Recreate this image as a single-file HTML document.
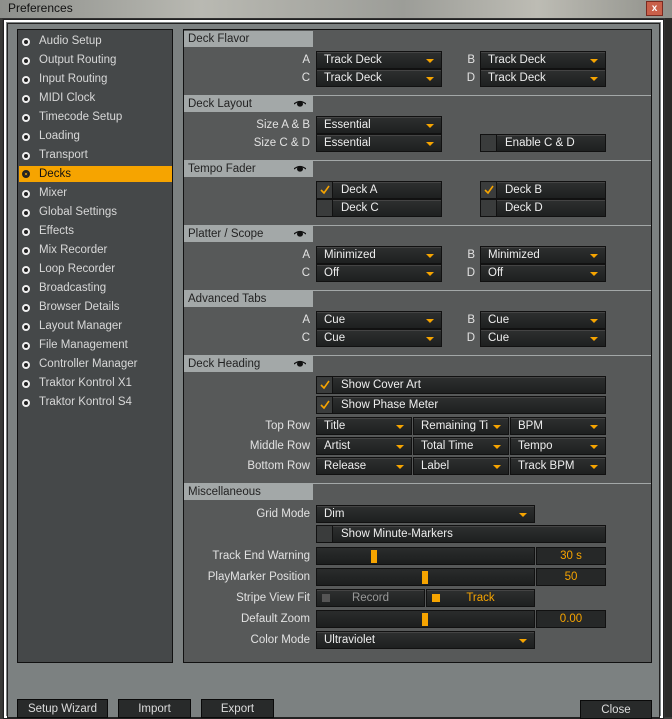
<!DOCTYPE html>
<html><head><meta charset="utf-8"><style>
*{margin:0;padding:0;box-sizing:border-box}
body{width:672px;height:717px;overflow:hidden;background:#3a3a38;font-family:"Liberation Sans",sans-serif;font-size:11.5px;position:relative}
.abs{position:absolute}
#titlebar{left:0;top:0;width:672px;height:18px;background:linear-gradient(90deg,#8d8f8b,#b9b9b2 30%,#9c9d98 60%,#bdbcb4 80%,#8f908a);}
#title{left:8px;top:1px;font-size:12px;color:#111}
#closex{left:646px;top:1px;width:17px;height:15px;background:#c9604a;border:1px solid #7a2a20;color:#fff;font-size:10px;font-weight:bold;text-align:center;line-height:13px}
#frame{left:2px;top:18px;width:663px;height:700px;background:#e8e8e8;border:1px solid #333}
#frame2{left:4px;top:20px;width:659px;height:698px;background:#7c8181;border:2px solid #fff;outline:1px solid #222}
#frame3{left:7px;top:23px;width:653px;height:695px;background:#7c8181;border:1px solid #222}
#right{left:665px;top:18px;width:7px;height:699px;background:#2a2a28}
#list{left:17px;top:29px;width:156px;height:634px;background:#454849;border:1px solid #111}
.li{position:absolute;left:21px;color:#d8d8d8;height:19px;line-height:19px;width:151px;padding-left:18px}
.li::before{content:"";position:absolute;left:1px;top:6px;width:8px;height:8px;border-radius:50%;border:2px solid #eee;background:#222;box-sizing:border-box}
.li.sel{background:#f6a400;color:#111;left:19px;padding-left:20px}
.li.sel::before{border-color:#222;background:#f6a400;left:3px;top:4px;box-shadow:inset 0 0 0 1px #222}
#panel{left:183px;top:29px;width:469px;height:634px;background:#575959;border:1px solid #111}
.hd{position:absolute;left:184px;width:129px;height:16px;background:#a3a8a8;color:#222;line-height:16px;padding-left:4px}
.sep{position:absolute;left:184px;width:467px;height:1px;background:#a3a8a8}
.eye{position:absolute;left:110px;top:4px;width:12px;height:7px}
.lb{position:absolute;color:#e2e2e2;text-align:right;width:140px;left:170px;height:18px;line-height:18px}
.dd{position:absolute;height:18px;background:linear-gradient(#2e3030,#1e2020);border:1px solid #111;color:#eee;line-height:16px;padding-left:7px;white-space:nowrap;overflow:hidden;box-shadow:inset 0 1px 0 #444}
.dd::after{content:"";position:absolute;right:7px;top:7px;border-left:4px solid transparent;border-right:4px solid transparent;border-top:4px solid #f6a400}
.cb{position:absolute;height:18px;background:linear-gradient(#2e3030,#1e2020);border:1px solid #111;color:#eee;line-height:16px;padding-left:24px;box-shadow:inset 0 1px 0 #444}
.cb::before{content:"";position:absolute;left:0;top:0;width:15px;height:16px;background:#3a3c3c;border-right:1px solid #111}
.cb.nb::before{display:none}
.cb .ck{position:absolute;left:3px;top:3px;width:10px;height:10px}
.sl{position:absolute;height:18px;background:linear-gradient(#2a2c2c,#1c1e1e);border:1px solid #111}
.sl i{position:absolute;top:2px;width:6px;height:13px;background:#f6a400}
.val{position:absolute;height:18px;background:#262828;border:1px solid #111;color:#f6a400;text-align:center;line-height:16px}
.btn{position:absolute;top:699px;height:19px;background:#282a2a;border:1px solid #0a0a0a;color:#ddd;text-align:center;line-height:18px}
</style></head><body>
<div id="titlebar" class="abs"></div>
<div id="title" class="abs">Preferences</div>
<div id="closex" class="abs">x</div>
<div id="frame" class="abs"></div>
<div id="frame2" class="abs"></div>
<div id="frame3" class="abs"></div>
<div id="right" class="abs"></div>

<div id="list" class="abs"></div>
<div class="li" style="top:32px">Audio Setup</div>
<div class="li" style="top:51px">Output Routing</div>
<div class="li" style="top:70px">Input Routing</div>
<div class="li" style="top:89px">MIDI Clock</div>
<div class="li" style="top:108px">Timecode Setup</div>
<div class="li" style="top:127px">Loading</div>
<div class="li" style="top:146px">Transport</div>
<div class="li sel" style="top:166px;height:16px;line-height:16px;width:153px">Decks</div>
<div class="li" style="top:184px">Mixer</div>
<div class="li" style="top:203px">Global Settings</div>
<div class="li" style="top:222px">Effects</div>
<div class="li" style="top:241px">Mix Recorder</div>
<div class="li" style="top:260px">Loop Recorder</div>
<div class="li" style="top:279px">Broadcasting</div>
<div class="li" style="top:298px">Browser Details</div>
<div class="li" style="top:317px">Layout Manager</div>
<div class="li" style="top:336px">File Management</div>
<div class="li" style="top:355px">Controller Manager</div>
<div class="li" style="top:374px">Traktor Kontrol X1</div>
<div class="li" style="top:393px">Traktor Kontrol S4</div>

<div id="panel" class="abs"></div>

<div class="hd" style="top:31px">Deck Flavor</div>
<div class="lb" style="top:51px">A</div><div class="dd" style="left:316px;top:51px;width:126px">Track Deck</div>
<div class="lb" style="top:69px">C</div><div class="dd" style="left:316px;top:69px;width:126px">Track Deck</div>
<div class="lb" style="top:51px;left:335px">B</div><div class="dd" style="left:480px;top:51px;width:126px">Track Deck</div>
<div class="lb" style="top:69px;left:335px">D</div><div class="dd" style="left:480px;top:69px;width:126px">Track Deck</div>
<div class="sep" style="top:95px"></div>

<div class="hd" style="top:96px">Deck Layout<svg class="eye" viewBox="0 0 12 7"><path d="M0 4Q6-1 12 4" fill="none" stroke="#111" stroke-width="1.3"/><ellipse cx="6" cy="4" rx="3" ry="2.6" fill="#111"/></svg></div>
<div class="lb" style="top:116px">Size A &amp; B</div><div class="dd" style="left:316px;top:116px;width:126px">Essential</div>
<div class="lb" style="top:134px">Size C &amp; D</div><div class="dd" style="left:316px;top:134px;width:126px">Essential</div>
<div class="cb" style="left:480px;top:134px;width:126px">Enable C &amp; D</div>
<div class="sep" style="top:160px"></div>

<div class="hd" style="top:161px">Tempo Fader<svg class="eye" viewBox="0 0 12 7"><path d="M0 4Q6-1 12 4" fill="none" stroke="#111" stroke-width="1.3"/><ellipse cx="6" cy="4" rx="3" ry="2.6" fill="#111"/></svg></div>
<div class="cb" style="left:316px;top:181px;width:126px"><svg class="ck" viewBox="0 0 10 10"><path d="M1 5L4 8L9 1" fill="none" stroke="#f6a400" stroke-width="1.6"/></svg>Deck A</div>
<div class="cb" style="left:316px;top:199px;width:126px">Deck C</div>
<div class="cb" style="left:480px;top:181px;width:126px"><svg class="ck" viewBox="0 0 10 10"><path d="M1 5L4 8L9 1" fill="none" stroke="#f6a400" stroke-width="1.6"/></svg>Deck B</div>
<div class="cb" style="left:480px;top:199px;width:126px">Deck D</div>
<div class="sep" style="top:225px"></div>

<div class="hd" style="top:226px">Platter / Scope<svg class="eye" viewBox="0 0 12 7"><path d="M0 4Q6-1 12 4" fill="none" stroke="#111" stroke-width="1.3"/><ellipse cx="6" cy="4" rx="3" ry="2.6" fill="#111"/></svg></div>
<div class="lb" style="top:246px">A</div><div class="dd" style="left:316px;top:246px;width:126px">Minimized</div>
<div class="lb" style="top:264px">C</div><div class="dd" style="left:316px;top:264px;width:126px">Off</div>
<div class="lb" style="top:246px;left:335px">B</div><div class="dd" style="left:480px;top:246px;width:126px">Minimized</div>
<div class="lb" style="top:264px;left:335px">D</div><div class="dd" style="left:480px;top:264px;width:126px">Off</div>
<div class="sep" style="top:290px"></div>

<div class="hd" style="top:291px">Advanced Tabs</div>
<div class="lb" style="top:311px">A</div><div class="dd" style="left:316px;top:311px;width:126px">Cue</div>
<div class="lb" style="top:329px">C</div><div class="dd" style="left:316px;top:329px;width:126px">Cue</div>
<div class="lb" style="top:311px;left:335px">B</div><div class="dd" style="left:480px;top:311px;width:126px">Cue</div>
<div class="lb" style="top:329px;left:335px">D</div><div class="dd" style="left:480px;top:329px;width:126px">Cue</div>
<div class="sep" style="top:355px"></div>

<div class="hd" style="top:356px">Deck Heading<svg class="eye" viewBox="0 0 12 7"><path d="M0 4Q6-1 12 4" fill="none" stroke="#111" stroke-width="1.3"/><ellipse cx="6" cy="4" rx="3" ry="2.6" fill="#111"/></svg></div>
<div class="cb" style="left:316px;top:376px;width:290px"><svg class="ck" viewBox="0 0 10 10"><path d="M1 5L4 8L9 1" fill="none" stroke="#f6a400" stroke-width="1.6"/></svg>Show Cover Art</div>
<div class="cb" style="left:316px;top:396px;width:290px"><svg class="ck" viewBox="0 0 10 10"><path d="M1 5L4 8L9 1" fill="none" stroke="#f6a400" stroke-width="1.6"/></svg>Show Phase Meter</div>
<div class="lb" style="top:417px">Top Row</div>
<div class="dd" style="left:316px;top:417px;width:96px">Title</div>
<div class="dd" style="left:413px;top:417px;width:96px">Remaining Ti</div>
<div class="dd" style="left:510px;top:417px;width:96px">BPM</div>
<div class="lb" style="top:437px">Middle Row</div>
<div class="dd" style="left:316px;top:437px;width:96px">Artist</div>
<div class="dd" style="left:413px;top:437px;width:96px">Total Time</div>
<div class="dd" style="left:510px;top:437px;width:96px">Tempo</div>
<div class="lb" style="top:457px">Bottom Row</div>
<div class="dd" style="left:316px;top:457px;width:96px">Release</div>
<div class="dd" style="left:413px;top:457px;width:96px">Label</div>
<div class="dd" style="left:510px;top:457px;width:96px">Track BPM</div>
<div class="sep" style="top:483px"></div>

<div class="hd" style="top:484px">Miscellaneous</div>
<div class="lb" style="top:505px">Grid Mode</div><div class="dd" style="left:316px;top:505px;width:219px">Dim</div>
<div class="cb" style="left:316px;top:525px;width:290px">Show Minute-Markers</div>
<div class="lb" style="top:547px">Track End Warning</div>
<div class="sl" style="left:316px;top:547px;width:219px"><i style="left:54px"></i></div>
<div class="val" style="left:536px;top:547px;width:70px">30 s</div>
<div class="lb" style="top:568px">PlayMarker Position</div>
<div class="sl" style="left:316px;top:568px;width:219px"><i style="left:105px"></i></div>
<div class="val" style="left:536px;top:568px;width:70px">50</div>
<div class="lb" style="top:589px">Stripe View Fit</div>
<div class="cb nb" style="left:316px;top:589px;width:109px;padding-left:0;text-align:center;color:#999"><i style="position:absolute;left:5px;top:4px;width:8px;height:8px;background:#555"></i>Record</div>
<div class="cb nb" style="left:426px;top:589px;width:109px;padding-left:0;text-align:center;color:#f6a400"><i style="position:absolute;left:5px;top:4px;width:8px;height:8px;background:#f6a400"></i>Track</div>
<div class="lb" style="top:610px">Default Zoom</div>
<div class="sl" style="left:316px;top:610px;width:219px"><i style="left:105px"></i></div>
<div class="val" style="left:536px;top:610px;width:70px">0.00</div>
<div class="lb" style="top:631px">Color Mode</div><div class="dd" style="left:316px;top:631px;width:219px">Ultraviolet</div>

<div class="btn" style="left:17px;width:91px">Setup Wizard</div>
<div class="btn" style="left:118px;width:73px">Import</div>
<div class="btn" style="left:201px;width:73px">Export</div>
<div class="btn" style="left:580px;width:72px;top:700px">Close</div>
</body></html>
